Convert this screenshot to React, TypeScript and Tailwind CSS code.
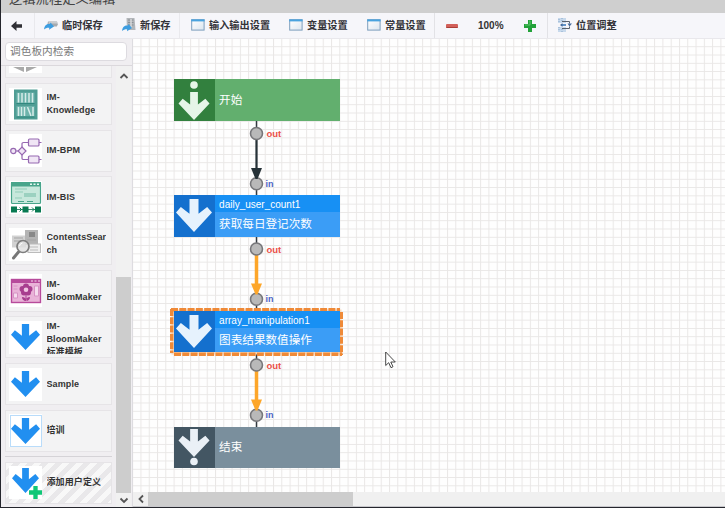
import React from "react";

const ARROW = "M12 0h8v13.500l7.700-6.200 4.300 5L16 30 0 12.300l4.300-5 7.700 6.200z";

function DownArrow({ className, fill }: { className: string; fill: string }) {
  return (
    <svg viewBox="0 0 32 30" preserveAspectRatio="none" className={className}>
      <path d={ARROW} fill={fill} />
    </svg>
  );
}

function BackIcon() {
  return (
    <svg viewBox="0 0 12 10" className="h-[10px] w-[12px]">
      <path d="M0 5 5.500 0v3.200H11v3.600H5.500V10z" fill="#303036" />
    </svg>
  );
}

function TempSaveIcon() {
  return (
    <svg viewBox="0 0 14 14" className="h-[14px] w-[14px] shrink-0">
      <path d="M4 3.500h9l.8 3-1 2H3z" fill="#a5aab0" />
      <path d="M5 3.500h8l.5 2H4.500z" fill="#c9cccf" />
      <path d="M0 11.500c.5-4.500 3-6 6-5.500l.5-1.500L10 8.500l-5 3.200.3-2C3.500 9.500 1.500 10 0 11.500z" fill="#3d9de0" />
    </svg>
  );
}

function SaveIcon() {
  return (
    <svg viewBox="0 0 14 14" className="h-[14px] w-[14px] shrink-0">
      <path d="M4.500 0h8l1 12H5z" fill="#b3b6ba" />
      <path d="M6 2h5.500M6 4.500h5.500M6 7h5.500" stroke="#8b9096" />
      <path d="M9 1v9" stroke="#d8dadd" strokeWidth="1.500" />
      <path d="M0 13c.5-4.500 3-6 6-5.500L6.500 6l3.500 4-5 3.200.3-2C3.500 11 1.500 11.500 0 13z" fill="#3d9de0" />
    </svg>
  );
}

function WindowIcon() {
  return (
    <svg viewBox="0 0 14 12" className="h-[12px] w-[14px] shrink-0">
      <defs>
        <linearGradient id="win" x2="1" y2="1">
          <stop stopColor="#fff" />
          <stop offset="1" stopColor="#dbe6ef" />
        </linearGradient>
      </defs>
      <rect x=".7" y=".7" width="12.400" height="10.400" fill="url(#win)" stroke="#7d9fbd" />
      <path d="M.2 1.400h13.400" stroke="#48a3df" strokeWidth="2" />
    </svg>
  );
}

function AlignIcon() {
  return (
    <svg viewBox="0 0 14 14" className="h-[14px] w-[14px] shrink-0">
      <path d="M0 0h8v5H0zM0 9h8v5H0z" fill="#c7d9ec" />
      <path d="M1 1v4M1 9v4M4 0v3M4 11v3" stroke="#8ba9cb" strokeDasharray="1 1" />
      <path d="M4 3.500h7.500v2M4 10.500h7.500v-2" fill="none" stroke="#59616c" />
      <path d="M3 7h5" stroke="#3273b8" strokeWidth="1.500" />
      <path d="M2 7l2.500-2v4zM9.500 5.500H14L11.500 8.500z" fill="#466b9c" />
    </svg>
  );
}

function ToolButton({ icon, label, className }: { icon: React.ReactNode; label: string; className: string }) {
  return (
    <div className={`flex shrink-0 items-center gap-[4px] whitespace-nowrap text-[10.200px] font-bold text-[#333338] ${className}`}>
      {icon}
      <span>{label}</span>
    </div>
  );
}

function Toolbar() {
  return (
    <div className="flex h-[26px] shrink-0 items-center border-b border-[#e9e8ec] bg-[#f6f6fa]">
      <div className="flex h-full w-[34px] items-center border-r border-[#e9e9ed] pl-[10px]">
        <BackIcon />
      </div>
      <div className="flex h-full w-[145px] items-center border-r border-[#e9e9ed] pl-[9px]">
        <ToolButton className="w-[78px]" icon={<TempSaveIcon />} label="临时保存" />
        <ToolButton className="" icon={<SaveIcon />} label="新保存" />
      </div>
      <div className="flex h-full w-[255px] items-center border-r border-[#e2e2e6] pl-[11px]">
        <ToolButton className="w-[98px]" icon={<WindowIcon />} label="输入输出设置" />
        <ToolButton className="w-[78px]" icon={<WindowIcon />} label="变量设置" />
        <ToolButton className="" icon={<WindowIcon />} label="常量设置" />
      </div>
      <div className="flex h-full w-[113px] items-center border-r border-[#e2e2e6] pl-[11px]">
        <div className="h-[4px] w-[12px] rounded-[1px] border-b border-[#a93d36] bg-[#d2605a]" />
        <span className="ml-[20px] w-[46px] text-[10px] font-bold text-[#333]">100%</span>
        <svg viewBox="0 0 12 12" className="h-[12px] w-[12px]">
          <path d="M4 0h4v4h4v4H8v4H4V8H0V4h4z" fill="#23a23a" />
          <path d="M5 1h1v4H1" fill="none" stroke="#5fc46c" />
        </svg>
      </div>
      <ToolButton className="ml-[10px]" icon={<AlignIcon />} label="位置调整" />
    </div>
  );
}

function KnowledgeIcon() {
  return (
    <svg viewBox="0 0 33 33" className="h-[33px] w-[33px]">
      <rect x="5" y="1.500" width="23.500" height="30" fill="#4f9d94" />
      <path d="M7.500 4.500h18v10.500h-18zM7.500 18h18v10.500h-18z" fill="#6db3ab" />
      <path d="M9.500 5v9.500M13 5v9.500M16.500 5v9.500M20 5v9.500M23.500 5v9.500M9.500 19v9M12.500 19v9M15.500 19v9M18.500 19l3.500 9M24 19v9" stroke="#d6ece9" strokeWidth="1.500" />
      <path d="M7.500 15.500h18M7.500 29h18" stroke="#2f877e" strokeWidth="1.200" />
    </svg>
  );
}

function BpmIcon() {
  return (
    <svg viewBox="0 0 33 33" className="h-[33px] w-[33px]">
      <g fill="#f0e6f5" stroke="#9668b1" strokeWidth="1.200">
        <path d="M7 17h3M13 13V9.500q0-1 1.500-1H20M13 21v3.500q0 1 1.500 1H20M30 8.500h2.500M30 25.500h2.500" fill="none" />
        <circle cx="4.300" cy="17" r="2.600" />
        <path d="m13 13 4 4-4 4-4-4z" />
        <rect x="19.500" y="5" width="10.500" height="7" rx="1" />
        <rect x="19.500" y="22" width="10.500" height="7" rx="1" />
      </g>
    </svg>
  );
}

function BisIcon() {
  return (
    <svg viewBox="0 0 33 33" className="h-[33px] w-[33px]">
      <rect x="2.500" y="1.500" width="29" height="21" rx="1" fill="#c7e8dc" stroke="#48a58b" strokeWidth="1.200" />
      <path d="M2 1h30v4.500H2z" fill="#48a58b" />
      <path d="M21 3.300h2M24.500 3.300h2M28 3.300h2" stroke="#e7f7f1" strokeWidth="1.500" />
      <path d="M6 8h12M6 11h8M6 17h7" stroke="#91cdb9" />
      <path d="M15 12h12v4H15z" fill="#9bd1c0" />
      <path d="M9 20.500h6M18 20.500h6" stroke="#48a58b" />
      <path d="M7 28.500h22" stroke="#3d8e75" />
      <path d="M2 25.500h6v6H2zM13.500 25.500h6v6h-6zM26 25.500h6v6h-6z" fill="#087a52" />
      <path d="m10.500 26.500 2 2-2 2M23 26.500l2 2-2 2" fill="none" stroke="#087a52" />
    </svg>
  );
}

function SearchDocsIcon() {
  return (
    <svg viewBox="0 0 33 33" className="h-[33px] w-[33px]">
      <path d="M3 7.500h14v12H3z" fill="#d2d2d2" />
      <path d="M16 2h13v15H16z" fill="#b4b4b4" />
      <path d="M20 4h6v5h-6z" fill="#888" />
      <path d="M5 10h9M5 13h7M18 12h9" stroke="#a5a5a5" />
      <rect x="19" y="16" width="12.500" height="8.500" fill="#efefef" stroke="#bbb" />
      <path d="M21 19h8M21 22h8" stroke="#bbb" />
      <path d="m9.500 24-5 6" stroke="#777" strokeWidth="3" strokeLinecap="round" />
      <circle cx="14" cy="18.500" r="6" fill="#dedede" fillOpacity=".8" stroke="#7d7d7d" strokeWidth="1.700" />
      <path d="M10.500 18a3.500 3.500 0 0 1 3-3" fill="none" stroke="#fff" />
    </svg>
  );
}

function BloomIcon() {
  return (
    <svg viewBox="0 0 33 33" className="h-[33px] w-[33px]">
      <rect x="2.500" y="5.500" width="29" height="23" fill="#e9b3d8" stroke="#b74a9b" strokeWidth="1.400" />
      <path d="M2 5h30v4H2z" fill="#b74a9b" />
      <path d="M22 7h2M25.500 7h2M29 7h2" stroke="#f6ddef" strokeWidth="1.200" />
      <path d="M4.500 12h4M4.500 15h4M25.500 12h4v10h-4zM4.500 19h4v5h-4z" fill="#f5dcee" stroke="#d792c4" />
      <g fill="#a83e8f">
        <circle cx="17" cy="12.500" r="3" />
        <circle cx="13.500" cy="15" r="3" />
        <circle cx="20.500" cy="15" r="3" />
        <circle cx="15" cy="18.500" r="3" />
        <circle cx="19" cy="18.500" r="3" />
        <path d="M16.500 20h1v7h-1zM17 27q-4-.3-4-4 4 0 4 4zM17 27q4-.3 4-4-4 0-4 4z" />
      </g>
      <circle cx="17" cy="15.800" r="2.300" fill="#f0c6e2" />
    </svg>
  );
}

const arrowIcon = <DownArrow className="h-[26px] w-[29px]" fill="#218ff0" />;

function PaletteItem({ icon, lines, className = "" }: { icon: React.ReactNode; lines: string[]; className?: string }) {
  return (
    <div className={`flex h-[42px] shrink-0 items-center border border-[#e6e4e7] bg-[#f3f3f4] pl-[3px] ${className}`}>
      <div className="flex h-[33px] w-[33px] shrink-0 items-center justify-center bg-white">{icon}</div>
      <div className="ml-[4.500px] max-h-[34px] overflow-hidden whitespace-nowrap text-[9px] leading-[13px] font-bold tracking-[0.100px] text-[#333]">
        {lines.map((l) => (
          <div key={l}>{l}</div>
        ))}
      </div>
    </div>
  );
}

function Chevron({ d }: { d: string }) {
  return (
    <svg viewBox="0 0 10 10" className="h-[10px] w-[10px]">
      <path d={d} fill="none" stroke="#555" strokeWidth="1.800" />
    </svg>
  );
}

function Palette() {
  return (
    <div className="flex w-[132px] shrink-0 flex-col border-r border-[#dddce0] bg-[#f0eef1]">
      <div className="h-[27px] shrink-0 border-b border-[#dbd8dc] px-[4px] pt-[3px]">
        <div className="flex h-[19px] w-[122px] items-center rounded-[4px] border border-[#dddbe0] bg-white pl-[4px] text-[10.700px] whitespace-nowrap text-[#777]">
          调色板内检索
        </div>
      </div>
      <div className="flex min-h-0 flex-1">
        <div className="flex w-[115px] flex-col pl-[4px] pr-[4px]">
          <div className="mb-[5px] h-[12px] shrink-0 border border-t-0 border-[#e6e4e7] bg-[#f3f3f4] pl-[3px]">
            <svg viewBox="0 0 33 7" className="h-[7px] w-[33px] bg-white">
              <path d="m4 1 11 0v5zM17 1h11L17 6z" fill="#a9a9a9" />
            </svg>
          </div>
          <div className="flex flex-col gap-[4.700px]">
            <PaletteItem icon={<KnowledgeIcon />} lines={["IM-", "Knowledge"]} />
            <PaletteItem icon={<BpmIcon />} lines={["IM-BPM"]} />
            <PaletteItem icon={<BisIcon />} lines={["IM-BIS"]} />
            <PaletteItem icon={<SearchDocsIcon />} lines={["ContentsSear", "ch"]} />
            <PaletteItem icon={<BloomIcon />} lines={["IM-", "BloomMaker"]} />
            <PaletteItem icon={arrowIcon} lines={["IM-", "BloomMaker", "标准模板"]} />
            <PaletteItem icon={arrowIcon} lines={["Sample"]} />
            <PaletteItem
              icon={<div className="flex h-[32px] w-[32px] items-center justify-center border border-[#b9dcfa]">{arrowIcon}</div>}
              lines={["培训"]}
            />
          </div>
          <div className="mt-[4px] mb-[5px] h-px shrink-0 bg-[#d5d3d7]" />
          <PaletteItem
            className="bg-[repeating-linear-gradient(135deg,#f8f8f8_0,#f8f8f8_5px,#e9e8ea_5px,#e9e8ea_10px)]"
            icon={
              <div className="relative h-[33px] w-[33px]">
                <DownArrow className="ml-[3px] mt-[2px] h-[25px] w-[27px]" fill="#218ff0" />
                <svg viewBox="0 0 12 12" className="absolute right-0 bottom-0 h-[13px] w-[13px]">
                  <path d="M4 0h4v4h4v4H8v4H4V8H0V4h4z" fill="#10c777" />
                </svg>
              </div>
            }
            lines={["添加用户定义"]}
          />
        </div>
        <div className="flex w-[15px] flex-col bg-[#f1f1f1]">
          <div className="flex h-[20px] items-center justify-center">
            <Chevron d="M1.500 7 5 3.500 8.500 7" />
          </div>
          <div className="mt-[191px] h-[216px] bg-[#cdcdcd]" />
          <div className="flex h-[14px] items-center justify-center">
            <Chevron d="M1.500 3.500 5 7l3.500-3.500" />
          </div>
        </div>
      </div>
    </div>
  );
}

function FlowNode({
  place,
  iconBg,
  bodyBg,
  headBg = "",
  id,
  label,
  icon,
}: {
  place: string;
  iconBg: string;
  bodyBg: string;
  headBg?: string;
  id?: string;
  label: string;
  icon: React.ReactNode;
}) {
  return (
    <div className={`absolute left-[40.600px] flex h-[41.600px] w-[166px] text-white ${place} ${bodyBg}`}>
      <div className={`flex w-[41.500px] items-center justify-center ${iconBg}`}>{icon}</div>
      <div className="flex flex-1 flex-col">
        {id && <div className={`h-[17px] pl-[4px] text-[10px] leading-[19px] ${headBg}`}>{id}</div>}
        <div className="flex flex-1 items-center pl-[4px] text-[11.600px] leading-[16px]">{label}</div>
      </div>
    </div>
  );
}

function Connector({ y, color, width }: { y: number; color: string; width: number }) {
  return (
    <g>
      <path d={`M123.500 ${y}v76`} stroke="#333a40" strokeWidth="1.500" />
      <path d={`M123.500 ${y + 13}v36`} stroke={color} strokeWidth={width} />
      <circle cx="123.500" cy={y + 12.500} r="6" fill="#b9b9b9" stroke="#77777a" strokeWidth="1.600" />
      <circle cx="123.500" cy={y + 62.700} r="6" fill="#b9b9b9" stroke="#77777a" strokeWidth="1.600" />
      <path d={`M118 ${y + 47}h11l-4.500 11h-2z`} fill={color} />
      <text x="133.500" y={y + 16} fill="#ea5048" fontSize="9.500" fontWeight="bold">
        out
      </text>
      <text x="132.500" y={y + 65.500} fill="#4b62c4" fontSize="9" fontWeight="bold">
        in
      </text>
    </g>
  );
}

function Canvas() {
  const blueIcon = <DownArrow className="mr-[1px] h-[33px] w-[36px]" fill="#e6f2fd" />;
  return (
    <div className="relative min-h-0 flex-1 overflow-hidden bg-[#fefefe]">
      <svg className="absolute inset-0 h-full w-full">
        <defs>
          <pattern id="grid" x="40.600" y="40.400" width="8.285" height="8.285" patternUnits="userSpaceOnUse">
            <path d="M.5 0v8.285M0 .5h8.285" stroke="#e9e7e6" />
          </pattern>
        </defs>
        <rect width="100%" height="100%" fill="url(#grid)" />
        <Connector y={82} color="#263238" width={2} />
        <Connector y={197.500} color="#fda629" width={3.500} />
        <Connector y={313.500} color="#fda629" width={3.500} />
      </svg>
      <FlowNode
        place="top-[40.300px]"
        iconBg="bg-[#32803e]"
        bodyBg="bg-[#62af6e]"
        label="开始"
        icon={
          <svg viewBox="0 0 32 40" className="h-[40px] w-[32px]">
            <circle cx="16" cy="5" r="3.800" fill="#e6f5e8" />
            <path transform="translate(.5 12) scale(.97 .93)" d={ARROW} fill="#e6f5e8" />
          </svg>
        }
      />
      <FlowNode
        place="top-[156px]"
        iconBg="bg-[#1470ce]"
        bodyBg="bg-[#3b9df6]"
        headBg="bg-[#1790f4]"
        id="daily_user_count1"
        label="获取每日登记次数"
        icon={blueIcon}
      />
      <svg viewBox="0 0 173 48" className="absolute left-[37px] top-[268.500px] h-[48px] w-[173px]">
        <rect x="1.500" y="1.500" width="170" height="45" fill="#f9dcc0" />
        <path d="M1 1.700h169M4 46.300h168M1.700 1v44M171.300 4v43" stroke="#ef8a38" strokeWidth="3.400" strokeDasharray="7 1.285" />
      </svg>
      <FlowNode
        place="top-[271.700px]"
        iconBg="bg-[#1470ce]"
        bodyBg="bg-[#3b9df6]"
        headBg="bg-[#1790f4]"
        id="array_manipulation1"
        label="图表结果数值操作"
        icon={blueIcon}
      />
      <FlowNode
        place="top-[387.500px]"
        iconBg="bg-[#435663]"
        bodyBg="bg-[#7a8f9d]"
        label="结束"
        icon={
          <svg viewBox="0 0 32 40" className="h-[40px] w-[32px]">
            <path transform="translate(.5 2) scale(.97 .93)" d={ARROW} fill="#eaf0f6" />
            <circle cx="16" cy="34.500" r="3.800" fill="#eaf0f6" />
          </svg>
        }
      />
      <svg viewBox="0 0 12 18" className="absolute left-[252px] top-[312px] h-[18px] w-[12px]">
        <path d="M.7 1v13.500l3-2.800 2.300 5 2-1-2.200-4.700h4.500z" fill="#fff" stroke="#333" strokeWidth=".9" />
      </svg>
    </div>
  );
}

export default function App() {
  return (
    <div className="flex h-[508px] w-[725px] flex-col overflow-hidden border-b border-l border-[#25262d] bg-[#f6f6fa] font-['Liberation_Sans','Noto_Sans_CJK_SC',sans-serif]">
      <div className="h-[13px] shrink-0 overflow-hidden bg-[#cfcfcf]">
        <div className="-mt-[9px] pl-[8px] text-[13.300px] leading-[16px] text-[#444]">逻辑流程定义编辑</div>
      </div>
      <Toolbar />
      <div className="flex min-h-0 flex-1">
        <Palette />
        <div className="flex min-w-0 flex-1 flex-col">
          <Canvas />
          <div className="flex h-[15px] shrink-0 border-b border-[#c8c8cc] bg-[#f0f0f0]">
            <div className="flex w-[15px] items-center justify-center">
              <Chevron d="M7 1.500 3.500 5 7 8.500" />
            </div>
            <div className="w-[205px] bg-[#cdcdcd]" />
          </div>
        </div>
      </div>
    </div>
  );
}
